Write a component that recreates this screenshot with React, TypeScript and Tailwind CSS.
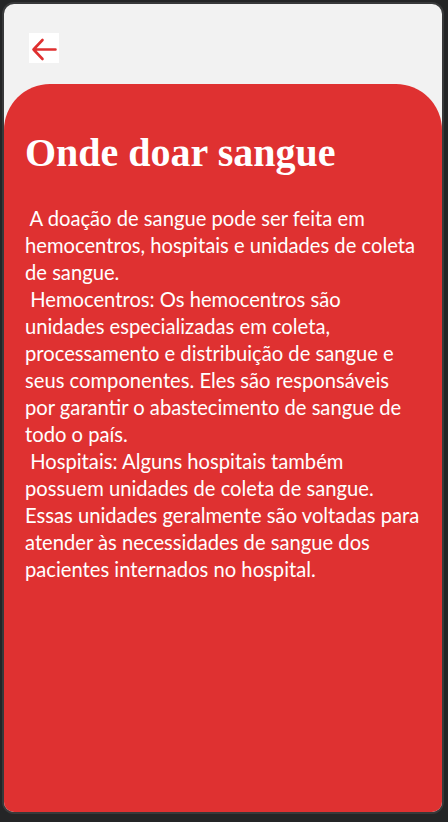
import React from "react";

const lines: string[][] = [
  [
    "\u00a0A doação de sangue pode ser feita em",
    "hemocentros, hospitais e unidades de coleta",
    "de sangue.",
  ],
  [
    "\u00a0Hemocentros: Os hemocentros são",
    "unidades especializadas em coleta,",
    "processamento e distribuição de sangue e",
    "seus componentes. Eles são responsáveis",
    "por garantir o abastecimento de sangue de",
    "todo o país.",
  ],
  [
    "\u00a0Hospitais: Alguns hospitais também",
    "possuem unidades de coleta de sangue.",
    "Essas unidades geralmente são voltadas para",
    "atender às necessidades de sangue dos",
    "pacientes internados no hospital.",
  ],
];

export default function App() {
  return (
    <div className="h-[822px] w-[448px] bg-[#242526] pt-[2px] pl-[2px] pr-[4px] pb-[8px]">
      <div className="flex h-full flex-col overflow-hidden rounded-[12px] border-2 border-[#38393a] bg-[#f2f2f2]">
        <div className="h-[80px] shrink-0 pl-[25px] pt-[29px]">
          <button className="flex h-[30px] w-[30px] items-center justify-center bg-white">
            <svg width="30" height="30" viewBox="0 0 30 30" fill="none">
              <path
                d="M26.5 16.5H4.5M13.5 7L4.5 16.5L13.5 26"
                stroke="#df3030"
                strokeWidth="2.6"
                strokeLinecap="round"
                strokeLinejoin="round"
              />
            </svg>
          </button>
        </div>
        <div className="flex-1 rounded-t-[46px] bg-[#df3131] px-[21px] pt-[47px]">
          <h1
            className="text-[40px] font-bold leading-[44px] text-white"
            style={{ fontFamily: '"Liberation Serif", "Times New Roman", serif' }}
          >
            Onde doar sangue
          </h1>
          <div
            className="mt-[30px] text-[20.2px] leading-[27px] text-white"
            style={{ fontFamily: 'Lato, "Noto Sans", sans-serif' }}
          >
            {lines.map((p, i) => (
              <p key={i}>
                {p.map((l, j) => (
                  <span key={j} className="block whitespace-nowrap">
                    {l}
                  </span>
                ))}
              </p>
            ))}
          </div>
        </div>
      </div>
    </div>
  );
}
